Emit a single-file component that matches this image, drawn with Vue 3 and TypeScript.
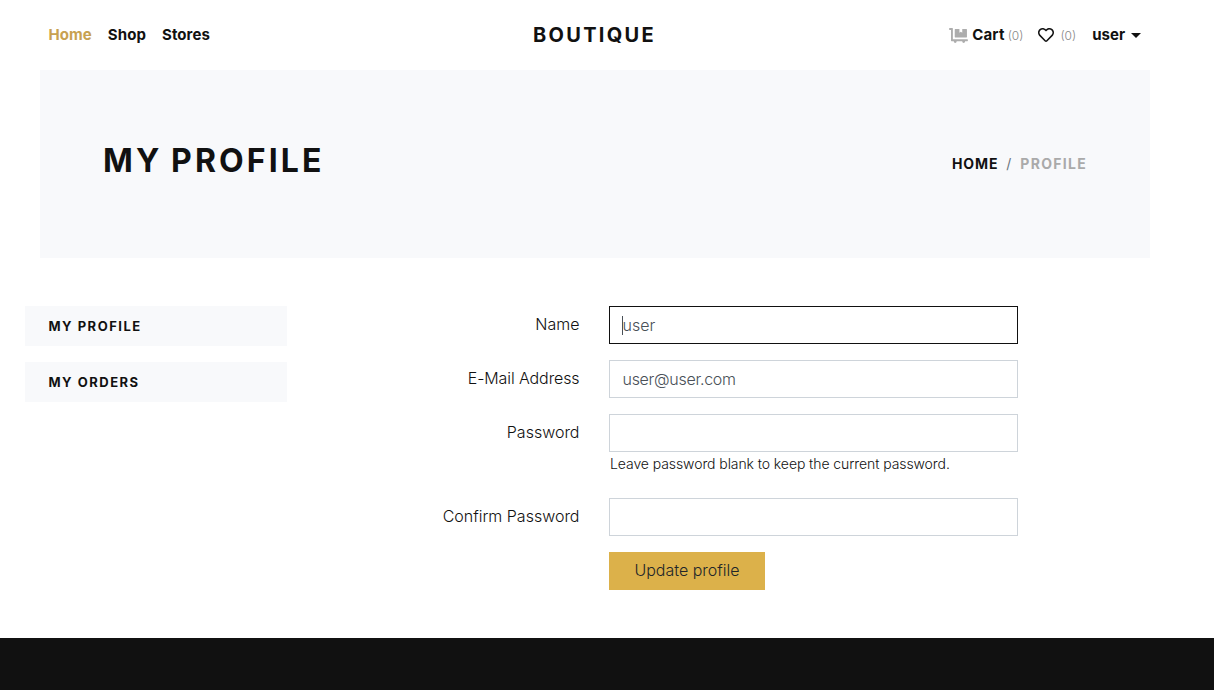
<script setup lang="ts">
import { ref } from 'vue'

interface Field {
  id: string
  label: string
  type: string
  value: string
  hint?: string
}

const fields = ref<Field[]>([
  { id: 'name', label: 'Name', type: 'text', value: 'user' },
  { id: 'email', label: 'E-Mail Address', type: 'email', value: 'user@user.com' },
  {
    id: 'password',
    label: 'Password',
    type: 'password',
    value: '',
    hint: 'Leave password blank to keep the current password.',
  },
  { id: 'confirm', label: 'Confirm Password', type: 'password', value: '' },
])
</script>

<template>
  <div class="page">
    <header class="navbar">
      <nav class="links">
        <a class="active">Home</a>
        <a>Shop</a>
        <a>Stores</a>
      </nav>
      <a class="brand">Boutique</a>
      <nav class="account">
        <a class="cart">
          <svg width="19" height="15" viewBox="0 0 640 512"><path fill="#adadad" d="M208 320h384c8.800 0 16-7.200 16-16V48c0-8.800-7.200-16-16-16H448v128l-48-32-48 32V32H208c-8.800 0-16 7.200-16 16v256c0 8.800 7.200 16 16 16zm416 64H128V16c0-8.800-7.200-16-16-16H16C7.200 0 0 7.200 0 16v32c0 8.800 7.200 16 16 16h48v368c0 8.800 7.200 16 16 16h82.900c-1.800 5-2.900 10.400-2.900 16 0 26.500 21.500 48 48 48s48-21.500 48-48c0-5.600-1.200-11-2.900-16H451c-1.800 5-2.900 10.400-2.900 16 0 26.500 21.500 48 48 48s48-21.500 48-48c0-5.600-1.200-11-2.900-16H624c8.800 0 16-7.200 16-16v-32c0-8.800-7.200-16-16-16z" /></svg>
          <span class="cart-label">Cart</span><small>(0)</small>
        </a>
        <a class="wish">
          <svg width="16" height="16" viewBox="0 0 512 512"><path fill="#111" d="M458.400 64.300C400.600 15.700 311.300 23 256 79.300 200.700 23 111.400 15.600 53.600 64.300-21.600 127.600-10.600 230.800 43 285.500l175.400 178.700c10 10.200 23.400 15.900 37.600 15.900 14.300 0 27.600-5.600 37.600-15.800L469 285.600c53.500-54.700 64.700-157.900-10.600-221.300zm-23.600 187.500L259.400 430.500c-2.400 2.400-4.400 2.400-6.800 0L77.200 251.800c-36.500-37.200-43.900-107.600 7.300-150.700 38.900-32.700 98.900-27.800 136.500 10.500l35 35.700 35-35.700c37.800-38.500 97.800-43.200 136.500-10.600 51.100 43.100 43.500 113.900 7.300 150.800z" /></svg>
          <small>(0)</small>
        </a>
        <a class="user"><span>user</span><i class="caret"></i></a>
      </nav>
    </header>

    <section class="hero">
      <h1>My profile</h1>
      <ol class="crumbs">
        <li>Home</li>
        <li class="slash">/</li>
        <li class="current">Profile</li>
      </ol>
    </section>

    <main class="content">
      <aside class="side">
        <a>My profile</a>
        <a>My orders</a>
      </aside>
      <form class="form" @submit.prevent>
        <div v-for="(f, i) in fields" :key="f.id" class="row" :class="{ tall: f.hint }">
          <label :for="f.id" :class="'label-' + f.id">{{ f.label }}</label>
          <div class="control">
            <div class="box" :class="{ focused: i === 0 }">
              <input :id="f.id" v-model="f.value" :class="'input-' + f.id" :type="f.type" />
              <i v-if="i === 0" class="text-cursor"></i>
            </div>
            <p v-if="f.hint">{{ f.hint }}</p>
          </div>
        </div>
        <button type="submit">Update profile</button>
      </form>
    </main>

    <footer></footer>
  </div>
</template>

<style>
body {
  margin: 0;
  background: #fff;
  overflow: hidden;
}
</style>

<style scoped>
.page {
  height: 690px;
  display: flex;
  flex-direction: column;
  font-family: Inter, "Liberation Sans", sans-serif;
  font-weight: 300;
  font-size: 16px;
  color: #111;
  box-sizing: border-box;
}
.navbar {
  height: 70px;
  flex: none;
  display: grid;
  grid-template-columns: 1fr auto 1fr;
  align-items: center;
  padding: 0 73px 0 48px;
  box-sizing: border-box;
}
.links,
.account {
  display: flex;
  align-items: center;
  font-weight: 700;
  font-size: 15px;
  line-height: 24px;
}
.links {
  gap: 16px;
  padding-left: 0.5px;
  letter-spacing: 0.08px;
}
.active {
  color: #c8a151;
}
.brand {
  font-size: 20px;
  font-weight: 700;
  letter-spacing: 2.3px;
  text-transform: uppercase;
  line-height: 30px;
}
.account {
  justify-content: flex-end;
}
.account a {
  display: flex;
  align-items: center;
}
.account svg {
  flex: none;
}
.account small {
  font-size: 12px;
  font-weight: 300;
  color: #888;
  padding-top: 2px;
}
.cart-label {
  margin: 0 3px 0 4px;
  letter-spacing: 0.2px;
}
.wish {
  margin: 0 16px 0 15px;
}
.wish small {
  margin-left: 6px;
}
.caret {
  margin-left: 6px;
  border: 5px solid transparent;
  border-top-color: #111;
  border-bottom: 0;
}
.hero {
  flex: none;
  height: 188px;
  margin: 0 64px 0 40px;
  padding: 0 63px;
  box-sizing: border-box;
  background: #f8f9fb;
  display: flex;
  align-items: center;
  justify-content: space-between;
}
h1 {
  margin: -7px 0 0;
  font-size: 32px;
  font-weight: 700;
  letter-spacing: 3.1px;
  word-spacing: -2px;
  line-height: 40px;
  text-transform: uppercase;
}
.crumbs {
  display: flex;
  gap: 8px;
  margin: -2px 0 0;
  padding: 0;
  list-style: none;
  font-size: 14px;
  font-weight: 700;
  letter-spacing: 0.9px;
  text-transform: uppercase;
}
.slash {
  font-weight: 400;
  color: #6c757d;
}
.current {
  color: #aaa;
  letter-spacing: 1.3px;
}
.content {
  flex: none;
  height: 380px;
  display: flex;
  align-items: flex-start;
  padding: 48px 0 0 25px;
  box-sizing: border-box;
}
.side {
  width: 262px;
  display: flex;
  flex-direction: column;
  gap: 16px;
}
.side a {
  height: 40px;
  padding: 0 23.5px;
  background: #f8f9fb;
  font-size: 13px;
  line-height: 40px;
  font-weight: 700;
  letter-spacing: 1.5px;
  text-transform: uppercase;
}
.form {
  margin-left: 92px;
  width: 639px;
  display: flex;
  flex-direction: column;
}
.row {
  display: flex;
  height: 38px;
  margin-bottom: 16px;
}
.row.tall {
  height: 68px;
}
label {
  width: 200.5px;
  margin-right: 29.5px;
  line-height: 36px;
  text-align: right;
  white-space: nowrap;
}
.label-email {
  letter-spacing: -0.1px;
}
.control {
  width: 409px;
}
.box {
  position: relative;
  height: 38px;
  box-sizing: border-box;
  border: 1px solid #ced4da;
}
.box.focused {
  border-color: #111;
}
input {
  display: block;
  width: 100%;
  height: 36px;
  padding: 0 12.5px;
  box-sizing: border-box;
  border: 0;
  outline: 0;
  background: transparent;
  font: inherit;
  color: #495057;
}
.input-email {
  letter-spacing: -0.28px;
}
.text-cursor {
  position: absolute;
  left: 12px;
  top: 9px;
  width: 1px;
  height: 19px;
  background: #495057;
}
p {
  margin: 1px 0 0 1px;
  font-size: 14px;
  line-height: 21px;
  letter-spacing: -0.08px;
  white-space: nowrap;
}
button {
  margin-left: 230px;
  width: 156px;
  height: 38px;
  padding: 0 0 2px;
  border: 0;
  background: #dcb14a;
  color: #212529;
  font: inherit;
}
footer {
  flex: 1;
  background: #111;
}
</style>
